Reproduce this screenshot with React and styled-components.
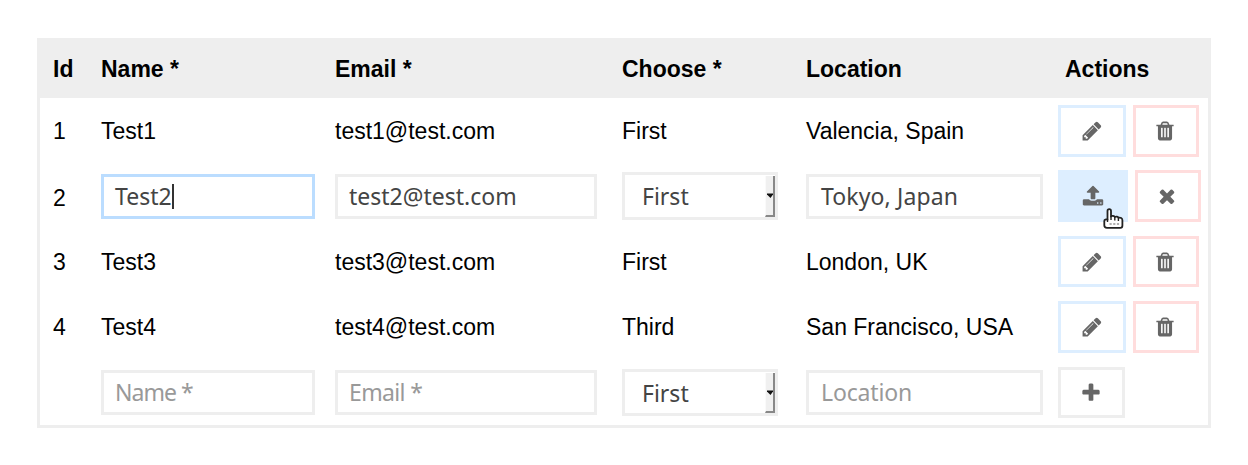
import React from "react";
import styled, { createGlobalStyle } from "styled-components";

const GlobalStyle = createGlobalStyle`
  * { box-sizing: border-box; }
  body {
    margin: 0;
    background: #fff;
    color: #000;
    font: 23px/26px "Liberation Sans", Arial, sans-serif;
  }
`;

const COLORS = { neutral: "#eee", edit: "#def", danger: "#fdd", focus: "#bdf" };

const Page = styled.main`
  padding: 38px 37px 37px;
`;

const Table = styled.div`
  width: 1174px;
  height: 390px;
  border: 3px solid #eee;
  border-top: 0;
`;

const Row = styled.div`
  display: grid;
  grid-template-columns: 48px 234px 287px 184px 252px 1fr;
  height: ${(p) => p.$height}px;
  padding-left: 13px;
  align-items: start;
`;

const HeadRow = styled(Row)`
  height: 60px;
  background: #eee;
  font-weight: 700;
`;

const HeadCell = styled.div`
  padding-top: 18px;
  padding-left: ${(p) => p.$indent || 0}px;
  white-space: nowrap;
`;

const Cell = styled.div`
  padding-top: ${(p) => p.$top || 20}px;
  white-space: nowrap;
`;

const Field = styled.div`
  display: flex;
  width: ${(p) => p.$width}px;
  height: 45px;
  margin-top: ${(p) => p.$top}px;
  padding-left: ${(p) => p.$indent || 11}px;
  border: 3px solid ${(p) => (p.$focus ? COLORS.focus : COLORS.neutral)};
  font-family: "Noto Sans", sans-serif;
  line-height: 39px;
  letter-spacing: ${(p) => p.$spacing || 0}px;
  color: ${(p) => (p.$placeholder ? "#999" : "#444")};
  white-space: nowrap;
`;

const Caret = styled.span`
  width: 2px;
  height: 25px;
  margin-top: 7px;
  background: #333;
`;

const SelectBox = styled(Field)`
  justify-content: space-between;
  width: 156px;
  height: ${(p) => p.$height}px;
  padding-left: 17px;
  line-height: ${(p) => p.$line}px;
`;

const SelectButton = styled.span`
  display: flex;
  align-items: center;
  justify-content: flex-end;
  width: 10px;
  margin: 1px 0 0;
  background: #f0f0f0;
  border-right: 2px solid #888;
  border-bottom: 2px solid #888;
  border-left: 1px solid #fafafa;
`;

const Actions = styled.div`
  display: flex;
  gap: 7px;
  padding-top: 7px;
`;

const Button = styled.button`
  display: flex;
  align-items: center;
  justify-content: center;
  width: ${(p) => p.$width}px;
  height: ${(p) => p.$height}px;
  margin: 0;
  padding: 0 ${(p) => p.$shift || 0}px 0 0;
  border: 3px solid ${(p) => COLORS[p.$tone]};
  background: ${(p) => (p.$filled ? COLORS[p.$tone] : "#fff")};
  color: #666;
  position: relative;
`;

const Pointer = styled.svg`
  position: absolute;
  left: 42px;
  top: 35px;
`;

const PATHS = {
  pencil:
    "M491 1536l91-91-235-235-91 91v107h128v128h107zm523-928q0-22-22-22-10 0-17 7l-542 542q-7 7-7 17 0 22 22 22 10 0 17-7l542-542q7-7 7-17zm-54-192l416 416-832 832h-416v-416zm683 96q0 53-37 90l-166 166-416-416 166-165q36-38 90-38 53 0 91 38l235 234q37 39 37 91z",
  trash:
    "M704 1376v-704q0-14-9-23t-23-9h-64q-14 0-23 9t-9 23v704q0 14 9 23t23 9h64q14 0 23-9t9-23zm256 0v-704q0-14-9-23t-23-9h-64q-14 0-23 9t-9 23v704q0 14 9 23t23 9h64q14 0 23-9t9-23zm256 0v-704q0-14-9-23t-23-9h-64q-14 0-23 9t-9 23v704q0 14 9 23t23 9h64q14 0 23-9t9-23zm-544-992h448l-48-117q-7-9-17-11h-317q-10 2-17 11zm928 32v64q0 14-9 23t-23 9h-96v948q0 83-47 143.5t-113 60.5h-832q-66 0-113-58.5t-47-141.5v-952h-96q-14 0-23-9t-9-23v-64q0-14 9-23t23-9h309l70-167q15-37 54-63t79-26h320q40 0 79 26t54 63l70 167h309q14 0 23 9t9 23z",
  upload:
    "M1344 1472q0-26-19-45t-45-19-45 19-19 45 19 45 45 19 45-19 19-45zm256 0q0-26-19-45t-45-19-45 19-19 45 19 45 45 19 45-19 19-45zm128-224v320q0 40-28 68t-68 28h-1472q-40 0-68-28t-28-68v-320q0-40 28-68t68-28h427q21 56 70.5 92t110.5 36h256q61 0 110.5-36t70.5-92h427q40 0 68 28t28 68zm-325-648q-17 40-59 40h-256v448q0 26-19 45t-45 19h-256q-26 0-45-19t-19-45v-448h-256q-42 0-59-40-17-39 14-69l448-448q18-19 45-19t45 19l448 448q31 30 14 69z",
  times:
    "M1490 1322q0 40-28 68l-136 136q-28 28-68 28t-68-28l-294-294-294 294q-28 28-68 28t-68-28l-136-136q-28-28-28-68t28-68l294-294-294-294q-28-28-28-68t28-68l136-136q28-28 68-28t68 28l294 294 294-294q28-28 68-28t68 28l136 136q28 28 28 68t-28 68l-294 294 294 294q28 28 28 68z",
  plus:
    "M1600 736v192q0 40-28 68t-68 28h-416v416q0 40-28 68t-68 28h-192q-40 0-68-28t-28-68v-416h-416q-40 0-68-28t-28-68v-192q0-40 28-68t68-28h416v-416q0-40 28-68t68-28h192q40 0 68 28t28 68v416h416q40 0 68 28t28 68z",
};

function Icon({ name }) {
  return (
    <svg width="22" height="22" viewBox="0 0 1792 1792" fill="currentColor" aria-hidden="true">
      <path d={PATHS[name]} />
    </svg>
  );
}

function HandPointer() {
  return (
    <Pointer width="24" height="24" viewBox="0 0 24 24" aria-hidden="true">
      <path
        d="M4.5 3C4.5 .6 8 .6 8 3V8.5C9 7.4 11.3 7.7 11.8 9C13 8.2 15 8.6 15.4 9.8C17.5 9.2 19.4 10.2 19.4 12.2V17.5C19.4 19.2 18.8 19.8 17.5 19.8H4C2.2 19.8 1.3 19 1.3 17.3V13C1.3 11.5 3 11 4.5 11.8Z"
        fill="#fff"
        stroke="#222"
        strokeWidth="1.8"
        strokeLinejoin="round"
      />
      <path d="M4.5 11V14M8 8v4M11.8 9V12.5M15.4 10V13" stroke="#222" strokeWidth="1.4" />
      <path d="M6.5 16h10" stroke="#999" strokeWidth="1.6" strokeDasharray="2.2 1.5" />
    </Pointer>
  );
}

function Select({ top, height, line }) {
  return (
    <SelectBox $top={top} $height={height} $line={line}>
      First
      <SelectButton>
        <svg width="6" height="5" viewBox="0 0 6 5">
          <path d="M0 .5H6V1.5L3.5 5L0 1.5Z" fill="#111" />
        </svg>
      </SelectButton>
    </SelectBox>
  );
}

function RecordRow({ record, height, buttonHeight }) {
  return (
    <Row $height={height}>
      {record.map((value) => (
        <Cell key={value}>{value}</Cell>
      ))}
      <Actions>
        <Button $tone="edit" $width={68} $height={buttonHeight} aria-label="edit">
          <Icon name="pencil" />
        </Button>
        <Button $tone="danger" $width={66} $height={buttonHeight} $shift={2} aria-label="delete">
          <Icon name="trash" />
        </Button>
      </Actions>
    </Row>
  );
}

export default function App() {
  return (
    <Page>
      <GlobalStyle />
      <Table>
        <HeadRow>
          <HeadCell>Id</HeadCell>
          <HeadCell>Name *</HeadCell>
          <HeadCell>Email *</HeadCell>
          <HeadCell>Choose *</HeadCell>
          <HeadCell>Location</HeadCell>
          <HeadCell $indent={7}>Actions</HeadCell>
        </HeadRow>

        <RecordRow height={65} buttonHeight={52} record={["1", "Test1", "test1@test.com", "First", "Valencia, Spain"]} />

        <Row $height={66}>
          <Cell $top={22}>2</Cell>
          <Field $width={214} $top={11} $focus>
            Test2
            <Caret />
          </Field>
          <Field $width={262} $top={11}>test2@test.com</Field>
          <Select top={9} height={48} line={43} />
          <Field $width={237} $top={11} $indent={12} $spacing={0.12}>Tokyo, Japan</Field>
          <Actions>
            <Button $tone="edit" $filled $width={70} $height={52} aria-label="save">
              <Icon name="upload" />
              <HandPointer />
            </Button>
            <Button $tone="danger" $width={66} $height={52} $shift={2} aria-label="cancel">
              <Icon name="times" />
            </Button>
          </Actions>
        </Row>

        <RecordRow height={65} buttonHeight={51} record={["3", "Test3", "test3@test.com", "First", "London, UK"]} />
        <RecordRow height={66} buttonHeight={52} record={["4", "Test4", "test4@test.com", "Third", "San Francisco, USA"]} />

        <Row $height={65}>
          <Cell />
          <Field $width={214} $top={10} $spacing={-0.95} $placeholder>Name *</Field>
          <Field $width={262} $top={10} $spacing={-0.65} $placeholder>Email *</Field>
          <Select top={9} height={47} line={42} />
          <Field $width={237} $top={10} $indent={12} $spacing={-0.15} $placeholder>Location</Field>
          <Actions>
            <Button $tone="neutral" $width={67} $height={51} $shift={1} aria-label="add">
              <Icon name="plus" />
            </Button>
          </Actions>
        </Row>
      </Table>
    </Page>
  );
}
